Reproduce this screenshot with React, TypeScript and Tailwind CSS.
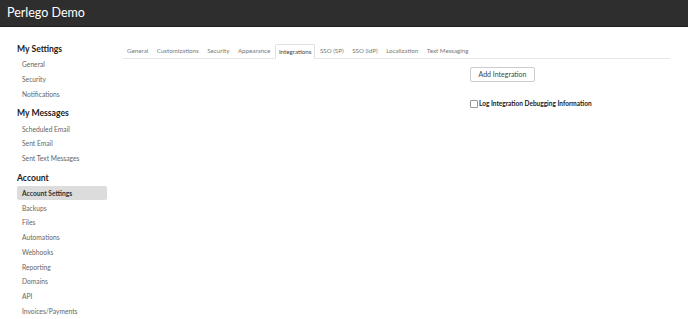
import React from "react";

const font = { fontFamily: "Lato, 'Noto Sans', sans-serif" };

function SideItem({ label, active }: { label: string; active?: boolean }) {
  return (
    <div
      className={
        "h-[14.75px] flex items-center pl-[5px] text-[6.7px] rounded-[2px] " +
        (active ? "bg-[#dcdcdc] text-[#333] font-bold" : "text-[#666]")
      }
    >
      {label}
    </div>
  );
}

function Heading({ label }: { label: string }) {
  return <div className="text-[8.6px] font-bold text-[#222] h-[15px] flex items-center">{label}</div>;
}

const tabs = [
  "General",
  "Customizations",
  "Security",
  "Appearance",
  "Integrations",
  "SSO (SP)",
  "SSO (IdP)",
  "Localization",
  "Text Messaging",
];

export default function App() {
  return (
    <div className="w-[688px] h-[319px] overflow-hidden bg-white" style={font}>
      <div className="h-[27px] bg-[#2e2e2e] border-b border-[#1e1e1e] flex items-center pl-[7px]">
        <span className="text-white text-[12.5px]">Perlego Demo</span>
      </div>
      <div className="flex">
        <div className="w-[90px] ml-[17px] pt-[15px] flex flex-col">
          <Heading label="My Settings" />
          <SideItem label="General" />
          <SideItem label="Security" />
          <SideItem label="Notifications" />
          <div className="h-[5px]" />
          <Heading label="My Messages" />
          <SideItem label="Scheduled Email" />
          <SideItem label="Sent Email" />
          <SideItem label="Sent Text Messages" />
          <div className="h-[5px]" />
          <Heading label="Account" />
          <SideItem label="Account Settings" active />
          <SideItem label="Backups" />
          <SideItem label="Files" />
          <SideItem label="Automations" />
          <SideItem label="Webhooks" />
          <SideItem label="Reporting" />
          <SideItem label="Domains" />
          <SideItem label="API" />
          <SideItem label="Invoices/Payments" />
        </div>
        <div className="ml-[16px] w-[547px] pt-[17px]">
          <div className="flex border-b border-[#e6e6e6] h-[15px]">
            {tabs.map((t) => (
              <div
                key={t}
                className={
                  "px-[3px] mr-[0.6px] text-[6.2px] flex items-center " +
                  (t === "Integrations"
                    ? "border border-[#e0e0e0] border-b-white -mb-[1px] bg-white text-[#444] rounded-t-[2px]"
                    : "border border-transparent text-[#777]")
                }
              >
                {t}
              </div>
            ))}
          </div>
          <div className="ml-[347px] mt-[8px] flex flex-col items-start">
            <button className="h-[15px] w-[65px] border border-[#ccc] rounded-[2px] text-[7px] text-[#444] bg-white">
              Add Integration
            </button>
            <label className="mt-[17px] flex items-center gap-[1px] text-[6.5px] font-bold text-[#222]">
              <span className="w-[8px] h-[8px] border border-[#999] rounded-[1px] bg-white inline-block" />
              Log Integration Debugging Information
            </label>
          </div>
        </div>
      </div>
    </div>
  );
}
